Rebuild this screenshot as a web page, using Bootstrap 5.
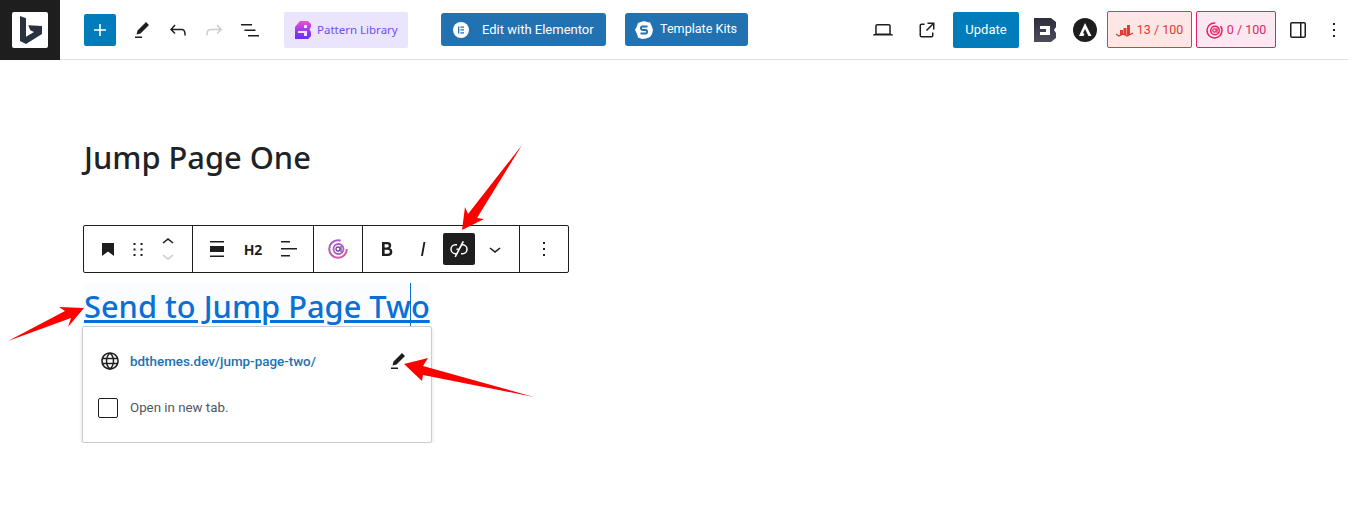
<!DOCTYPE html>
<html lang="en">
<head>
  <meta charset="UTF-8" />
  <meta name="viewport" content="width=device-width, initial-scale=1.0"/>
  <title>Jump Page One</title>
  <link href="https://cdn.jsdelivr.net/npm/bootstrap@5.3.3/dist/css/bootstrap.min.css" rel="stylesheet"/>
  <style>
    body {
      background: #fff;
      color: #1e1e1e;
      font-family: Roboto, "Noto Sans", sans-serif;
      overflow: hidden;
    }
    .top-bar {
      height: 60px;
      border-bottom: 1px solid #e0e0e0;
    }
    .logo-block {
      width: 60px;
      height: 60px;
      background: #1e1e1e;
    }
    .logo-tile {
      width: 36px;
      height: 36px;
      background: #fff;
      border-radius: 2px;
    }
    .wp-ico {
      width: 24px;
      height: 24px;
      fill: #1e1e1e;
      flex: none;
    }
    .ico-slot {
      width: 36px;
      height: 36px;
    }
    .ico-slot.faded .wp-ico { fill: #ccc; }
    .add-btn {
      width: 32px;
      height: 32px;
      margin-left: 24px;
      background: #007cba;
      border-radius: 2px;
    }
    .add-btn .wp-ico { fill: #fff; }
    .pattern-btn {
      width: 124px;
      height: 36px;
      margin-left: 16px;
      background: #ebe4fd;
      border-radius: 2px;
      color: #6d4ff0;
      font-family: "Noto Sans", sans-serif;
      font-size: 11.5px;
      gap: 6px;
      padding-left: 11px;
    }
    .builder-btn {
      height: 33px;
      background: #2271b1;
      border-radius: 3px;
      color: #fff;
      font-size: 13px;
    }
    .btn-elementor { width: 165px; margin-left: 33px; padding-left: 12px; gap: 13px; }
    .btn-kits { width: 123px; margin-left: 19px; padding-left: 10px; gap: 7px; font-size: 12.6px; }
    .laptop-slot { margin-left: 117px; }
    .update-btn {
      width: 66px;
      height: 36px;
      background: #007cba;
      border-radius: 2px;
      color: #fff;
      font-size: 13px;
      margin-left: 8px;
    }
    .brand-b { margin-left: 15px; }
    .brand-a { margin-left: 17px; }
    .score-chip {
      height: 37px;
      padding-top: 2px;
      border: 1px solid;
      border-radius: 2px;
      font-size: 12.5px;
      gap: 4px;
    }
    .chip-seo { width: 85px; margin-left: 10px; color: #e53935; border-color: #e53935; background: #fde6e6; }
    .chip-ai { width: 80px; margin-left: 4px; color: #e91e63; border-color: #e91e63; background: #fce8f0; }
    .side-slot { margin-left: 4px; }
    .last-slot { width: 28px; height: 36px; margin-left: 4px; }
    .editor-area {
      padding: 78px 0 0 84px;
    }
    .page-heading {
      font-family: "Noto Sans", sans-serif;
      font-size: 30.8px;
      font-weight: 500;
      line-height: 38px;
      color: #1d2327;
      margin: 0 0 49px;
    }
    .block-bar {
      width: 486px;
      height: 48px;
      margin-left: -1px;
      border: 1px solid #1e1e1e;
      border-radius: 2px;
    }
    .bar-group {
      padding: 0 6px;
      border-right: 1px solid #1e1e1e;
      height: 100%;
    }
    .bar-group:last-child { border-right: 0; }
    .narrow-slot { width: 24px; }
    .mover-stack svg { display: block; margin: -5px 0; }
    .mover-stack .mover-off { fill: #ccc; }
    .h2-label { font-family: "Noto Sans", sans-serif; font-size: 14px; font-weight: 700; }
    .link-on {
      width: 32px;
      height: 32px;
      background: #1e1e1e;
      border-radius: 2px;
      margin: 0 2px;
    }
    .link-on .wp-ico { fill: #fff; }
    .link-block {
      width: 346px;
      margin: 10px 0 0;
      height: 43px;
      background: #fbfcff;
    }
    .link-heading {
      font-family: "Noto Sans", sans-serif;
      font-size: 30.8px;
      font-weight: 500;
      line-height: 46px;
      margin: 0;
      white-space: nowrap;
    }
    .link-heading a {
      color: #0b6fd3;
      text-decoration-thickness: 2.5px;
    }
    .text-caret {
      left: 326px;
      top: 0;
      width: 1px;
      height: 43px;
      background: #0b6fd3;
    }
    .url-card {
      margin-left: -2px;
      width: 350px;
      height: 117px;
      background: #fff;
      border: 1px solid #ccc;
      border-radius: 2px;
      box-shadow: 0 2px 4px rgba(0, 0, 0, .12);
    }
    .url-row {
      padding: 20px 0 0 15px;
      gap: 8px;
    }
    .url-row a {
      color: #2271b1;
      font-size: 13.4px;
      font-weight: 500;
      line-height: 26px;
      padding-top: 2px;
      text-decoration: none;
    }
    .url-edit { margin: 0 0 0 auto; padding-right: 21px; }
    .tab-check {
      padding: 23px 0 0 15px;
      gap: 12px;
      font-size: 13.3px;
      color: #50575e;
    }
    .tab-check .form-check-input {
      width: 20px;
      height: 20px;
      margin: 0;
      border: 1px solid #1e1e1e;
      border-radius: 2px;
    }
    .arrow-layer {
      left: 0;
      top: 0;
      z-index: 5;
      pointer-events: none;
    }
  </style>
</head>
<body>
  <header class="top-bar d-flex align-items-center">
    <div class="logo-block d-flex align-items-center justify-content-center">
      <div class="logo-tile">
        <svg width="36" height="36" viewBox="12 11 36 36"><path fill="#29313f" d="M20 15l6 2.2v18.5l8-4.700-3.700-1.700-2-5L42 25v8L26 43l-6-3z"/></svg>
      </div>
    </div>
    <div class="add-btn d-flex align-items-center justify-content-center">
      <svg class="wp-ico" viewBox="0 0 24 24"><path d="M18 11.200h-5.200V6h-1.600v5.200H6v1.600h5.200V18h1.600v-5.200H18z"/></svg>
    </div>
    <div class="ico-slot d-flex align-items-center justify-content-center ms-2">
      <svg class="wp-ico" viewBox="0 0 24 24"><path d="m19 7-3-3-8.500 8.500-1 4 4-1L19 7Zm-7 11.500H5V20h7v-1.500Z"/></svg>
    </div>
    <div class="ico-slot d-flex align-items-center justify-content-center">
      <svg class="wp-ico" viewBox="0 0 24 24"><path d="M18.300 11.700c-.6-.6-1.400-.9-2.300-.9H6.700l2.900-3.300-1.100-1-4.500 5L8.500 16l1-1-2.700-2.700H16c.5 0 .9.2 1.300.5 1 1 1 3.400 1 4.500v.3h1.500v-.2c0-1.500 0-4.300-1.500-5.700z"/></svg>
    </div>
    <div class="ico-slot faded d-flex align-items-center justify-content-center">
      <svg class="wp-ico" viewBox="0 0 24 24"><path d="M15.600 6.500l-1.100 1 2.900 3.300H8c-.9 0-1.700.3-2.300.9-1.400 1.500-1.400 4.200-1.400 5.600v.2h1.500v-.3c0-1.100 0-3.500 1-4.500.3-.3.7-.5 1.300-.5h9.200L14.500 15l1.100 1.100 4.600-4.600-4.600-5z"/></svg>
    </div>
    <div class="ico-slot d-flex align-items-center justify-content-center">
      <svg class="wp-ico" viewBox="0 0 24 24"><path d="M3 6h11v1.500H3V6Zm3.500 5.500h11V13h-11v-1.500ZM21 17H10v1.500h11V17Z"/></svg>
    </div>
    <div class="pattern-btn d-flex align-items-center">
      <svg width="16" height="18" viewBox="0 0 16 18">
        <defs><linearGradient id="plGrad" x1="0" y1="0" x2="0" y2="1"><stop offset="0" stop-color="#f04fd0"/><stop offset=".5" stop-color="#a33cf0"/><stop offset="1" stop-color="#6a2cf5"/></linearGradient></defs>
        <path fill="url(#plGrad)" fill-rule="evenodd" d="M0 6L5 0h8l3 3v3l-1.500 2.500L16 11v4l-3 3H0zM9 4v3h3V4zM3 10v2h6v3h3v-5z"/>
      </svg>
      <span>Pattern Library</span>
    </div>
    <div class="builder-btn btn-elementor d-flex align-items-center">
      <svg width="16" height="16" viewBox="0 0 16 16"><circle cx="8" cy="8" r="8" fill="#fff"/><path fill="#2271b1" d="M5 4.500h1.300v7H5zM7.400 4.500H11v1.300H7.400zM7.400 7.300H11v1.300H7.400zM7.400 10.200H11v1.300H7.400z"/></svg>
      <span>Edit with Elementor</span>
    </div>
    <div class="builder-btn btn-kits d-flex align-items-center">
      <svg width="18" height="18" viewBox="0 0 18 18"><path fill="#fff" d="M9 0l3 1 3 .5 1.500 3L18 9l-1 4-2 3-4 1.500L7 18l-4-1.500L2 13 0 9l2-4 1-3z"/><path fill="none" stroke="#2271b1" stroke-width="2" d="M12.500 5.500H7.500Q6 5.500 6 7.200T7.500 9h3Q12 9 12 10.800T10.500 12.500h-5"/></svg>
      <span>Template Kits</span>
    </div>

    <div class="ico-slot laptop-slot d-flex align-items-center justify-content-center">
      <svg class="wp-ico" viewBox="0 0 24 24"><path d="M20.500 16h-.7V8c0-1.100-.9-2-2-2H6.200c-1.100 0-2 .9-2 2v8h-.7c-.8 0-1.500.7-1.500 1.500h20c0-.8-.7-1.500-1.500-1.500zM5.700 8c0-.3.2-.5.5-.5h11.600c.3 0 .5.2.5.5v7.600H5.700V8z"/></svg>
    </div>
    <div class="ico-slot d-flex align-items-center justify-content-center ms-2">
      <svg class="wp-ico" viewBox="0 0 24 24"><path d="M19.500 4.500h-7V6h4.440l-5.970 5.970 1.060 1.060L18 7.060v4.440h1.500v-7Zm-13 1a2 2 0 0 0-2 2v10a2 2 0 0 0 2 2h10a2 2 0 0 0 2-2v-3H17v3a.5.5 0 0 1-.5.5h-10a.5.5 0 0 1-.5-.5v-10a.5.5 0 0 1 .5-.5h3V5.500h-3Z"/></svg>
    </div>
    <div class="update-btn d-flex align-items-center justify-content-center">Update</div>
    <svg class="brand-b" width="22" height="24" viewBox="0 0 22 24">
      <defs><linearGradient id="bGrad" x1="0" y1="0" x2="0" y2="1"><stop offset="0" stop-color="#2e2e3a"/><stop offset="1" stop-color="#4c4c5c"/></linearGradient></defs>
      <path fill="url(#bGrad)" fill-rule="evenodd" d="M0 0h17l5 4v5l-2 3 2 3v5l-5 4H0zM6 8v9h10V8zM6 11h6v3H6z"/>
    </svg>
    <svg class="brand-a" width="24" height="24" viewBox="0 0 24 24">
      <circle cx="12" cy="12" r="12" fill="#1e1e1e"/><path fill="#fff" d="M12 5l6.500 13h-3l-3.500-7-2 4 1.500 1-1 2H6z"/>
    </svg>
    <div class="score-chip chip-seo d-flex align-items-center justify-content-center">
      <svg width="17" height="14" viewBox="0 0 17 14"><path fill="#e53935" d="M4 6h3v5H4zM7.500 4h3v7h-3zM11 1h3v10h-3z"/><path fill="none" stroke="#e53935" stroke-width="1.200" d="M0 10l3 2 4-2 4 2 6-3"/></svg>
      <span>13 / 100</span>
    </div>
    <div class="score-chip chip-ai d-flex align-items-center justify-content-center">
      <svg width="17" height="17" viewBox="0 0 17 17" fill="none" stroke="#e91e63"><circle cx="8.500" cy="8.500" r="7.500" stroke-width="1.500" stroke-dasharray="36 6"/><circle cx="9" cy="8.500" r="4.300" stroke-width="1.500"/><circle cx="8.500" cy="8.500" r="1.700" stroke-width="1.200"/><path d="M11 6v5" stroke-width="1.200"/></svg>
      <span>0 / 100</span>
    </div>
    <div class="ico-slot side-slot d-flex align-items-center justify-content-center">
      <svg class="wp-ico" viewBox="0 0 24 24"><path d="M18 4H6c-1.100 0-2 .9-2 2v12c0 1.100.9 2 2 2h12c1.100 0 2-.9 2-2V6c0-1.100-.9-2-2-2zm-4 14.500H6c-.3 0-.5-.2-.5-.5V6c0-.3.2-.5.5-.5h8v13zm4.500-.5c0 .3-.2.5-.5.5h-2.500v-13H18c.3 0 .5.2.5.5v12z"/></svg>
    </div>
    <div class="last-slot d-flex align-items-center justify-content-center">
      <svg class="wp-ico" viewBox="0 0 24 24"><path d="M13 19h-2v-2h2v2zm0-6h-2v-2h2v2zm0-6h-2V5h2v2z"/></svg>
    </div>
  </header>

  <main class="editor-area">
    <h1 class="page-heading">Jump Page One</h1>

    <div class="block-bar d-flex align-items-center">
      <div class="bar-group d-flex align-items-center">
        <div class="ico-slot d-flex align-items-center justify-content-center">
          <svg class="wp-ico" viewBox="0 0 24 24"><path d="M6 6h12v13l-6-4.500L6 19z"/></svg>
        </div>
        <div class="narrow-slot d-flex align-items-center justify-content-center">
          <svg class="wp-ico" viewBox="0 0 24 24"><path d="M7.500 6h2v2h-2zM14.500 6h2v2h-2zM7.500 11.500h2v2h-2zM14.500 11.500h2v2h-2zM7.500 17h2v2h-2zM14.500 17h2v2h-2z"/></svg>
        </div>
        <div class="ico-slot mover-stack d-flex flex-column align-items-center justify-content-center">
          <svg class="wp-ico" viewBox="0 0 24 24"><path d="M6.500 12.400L12 8l5.500 4.400-.9 1.200L12 10l-4.500 3.600-1-1.200z"/></svg>
          <svg class="wp-ico mover-off" viewBox="0 0 24 24"><path d="M17.500 11.600L12 16l-5.500-4.400.9-1.200L12 14l4.500-3.600 1 1.200z"/></svg>
        </div>
      </div>
      <div class="bar-group d-flex align-items-center">
        <div class="ico-slot d-flex align-items-center justify-content-center">
          <svg class="wp-ico" viewBox="0 0 24 24"><path d="M19 5.500H5V4h14v1.500ZM19 20H5v-1.500h14V20ZM5 9h14v6H5V9Z"/></svg>
        </div>
        <div class="ico-slot h2-label d-flex align-items-center justify-content-center">H2</div>
        <div class="ico-slot d-flex align-items-center justify-content-center">
          <svg class="wp-ico" viewBox="0 0 24 24"><path d="M13 5.500H4V4h9v1.500Zm7 7H4V11h16v1.500Zm-7 7H4V18h9v1.500Z"/></svg>
        </div>
      </div>
      <div class="bar-group d-flex align-items-center">
        <div class="ico-slot d-flex align-items-center justify-content-center">
          <svg width="20" height="20" viewBox="0 0 20 20" fill="none">
            <defs><linearGradient id="aiGrad" x1="0" y1="0" x2="1" y2="1"><stop offset="0" stop-color="#a45cc8"/><stop offset="1" stop-color="#e25a9c"/></linearGradient></defs>
            <circle cx="10" cy="10" r="8.800" stroke="url(#aiGrad)" stroke-width="2" stroke-dasharray="44 11"/>
            <circle cx="10.500" cy="10" r="5" stroke="#a45cc8" stroke-width="1.800"/>
            <circle cx="10" cy="10" r="2" stroke="#7a3fa8" stroke-width="1.300"/>
            <path d="M13 7v6" stroke="#7a3fa8" stroke-width="1.300"/>
          </svg>
        </div>
      </div>
      <div class="bar-group d-flex align-items-center">
        <div class="ico-slot d-flex align-items-center justify-content-center">
          <svg class="wp-ico" viewBox="0 0 24 24"><path d="M14.700 11.300c1-.6 1.500-1.600 1.500-3 0-2.300-1.300-3.400-4-3.400H7v14h5.800c1.400 0 2.500-.3 3.300-1 .8-.7 1.200-1.700 1.200-2.900.1-1.900-.8-3.100-2.600-3.700zm-5.100-4h2.300c.6 0 1.100.1 1.400.4.3.3.5.7.5 1.200s-.2 1-.5 1.200c-.3.3-.8.4-1.400.4H9.600V7.300zm4.600 9c-.4.3-1 .4-1.700.4H9.600v-3.900h2.900c.7 0 1.300.2 1.700.5.4.3.6.8.6 1.500s-.2 1.200-.6 1.500z"/></svg>
        </div>
        <div class="ico-slot d-flex align-items-center justify-content-center">
          <svg class="wp-ico" viewBox="0 0 24 24"><path d="M12.500 5L10 19h1.900l2.500-14z"/></svg>
        </div>
        <div class="link-on d-flex align-items-center justify-content-center">
          <svg class="wp-ico" viewBox="0 0 24 24"><path d="M17.031 4.703 15.576 4l-1.560 3H14v.03l-2.324 4.470H9.500V13h1.396l-1.502 2.889h-.95a3.694 3.694 0 0 1 0-7.389H10V7H8.444a5.194 5.194 0 1 0 0 10.389h.17L7.500 19.530l1.416.719L15.049 8.500h.507a3.694 3.694 0 0 1 0 7.390H14v1.500h1.556a5.194 5.194 0 0 0 .273-10.383l1.202-2.304Z"/></svg>
        </div>
        <div class="ico-slot d-flex align-items-center justify-content-center">
          <svg class="wp-ico" viewBox="0 0 24 24"><path d="M17.500 11.600L12 16l-5.500-4.400.9-1.200L12 14l4.500-3.600 1 1.200z"/></svg>
        </div>
      </div>
      <div class="bar-group d-flex align-items-center">
        <div class="ico-slot d-flex align-items-center justify-content-center">
          <svg class="wp-ico" viewBox="0 0 24 24"><path d="M13 19h-2v-2h2v2zm0-6h-2v-2h2v2zm0-6h-2V5h2v2z"/></svg>
        </div>
      </div>
    </div>

    <div class="link-block position-relative">
      <h2 class="link-heading"><a href="#">Send to Jump Page Two</a></h2>
      <span class="text-caret position-absolute"></span>
    </div>
    <div class="url-card">
      <div class="url-row d-flex align-items-center">
        <svg class="wp-ico" viewBox="0 0 24 24"><path d="M12 3.300c-4.800 0-8.800 3.900-8.800 8.800 0 4.800 3.900 8.800 8.800 8.800 4.800 0 8.800-3.900 8.800-8.800s-4-8.800-8.800-8.800zm6.500 5.500h-2.600C15.400 7.300 14.800 6 14 5c2 .6 3.600 2 4.500 3.800zm.7 3.200c0 .6-.1 1.200-.2 1.800h-2.900c.1-.6.1-1.200.1-1.800s-.1-1.200-.1-1.800H19c.2.6.2 1.200.2 1.800zM12 18.700c-1-.7-1.800-1.900-2.300-3.500h4.600c-.5 1.600-1.300 2.900-2.300 3.500zm-2.600-4.900c-.1-.6-.1-1.100-.1-1.800 0-.6.1-1.200.1-1.800h5.200c.1.600.1 1.100.1 1.800s-.1 1.200-.1 1.800H9.400zM4.800 12c0-.6.1-1.200.2-1.800h2.900c-.1.600-.1 1.200-.1 1.800 0 .6.1 1.200.1 1.800H5c-.2-.6-.2-1.200-.2-1.800zM12 5.300c1 .7 1.800 1.900 2.300 3.500H9.700c.5-1.600 1.300-2.900 2.300-3.500zM10 5c-.8 1-1.400 2.300-1.800 3.800H5.500C6.400 7 8 5.600 10 5zM5.500 15.300h2.600c.4 1.500 1 2.800 1.800 3.700-1.800-.6-3.400-2-4.400-3.700zM14 19c.8-1 1.400-2.200 1.800-3.700h2.600C17.600 17 16 18.400 14 19z"/></svg>
        <a href="#">bdthemes.dev/jump-page-two/</a>
        <div class="url-edit d-flex">
          <svg class="wp-ico" viewBox="0 0 24 24"><path d="m19 7-3-3-8.500 8.500-1 4 4-1L19 7Zm-7 11.500H5V20h7v-1.500Z"/></svg>
        </div>
      </div>
      <label class="tab-check d-flex align-items-center">
        <input class="form-check-input" type="checkbox"/>
        <span>Open in new tab.</span>
      </label>
    </div>
  </main>

  <svg class="arrow-layer position-absolute" width="1348" height="517" viewBox="0 0 1348 517">
    <path fill="#f00" d="M522 145L477 218l7 1-22 11 3-23 3 7z"/>
    <path fill="#f00" d="M8 341l57-30-6-4 25 1-16 19 3-9z"/>
    <path fill="#f00" d="M534 397L423 375l-1 6-18-17 24-6-5 8z"/>
  </svg>
</body>
</html>
